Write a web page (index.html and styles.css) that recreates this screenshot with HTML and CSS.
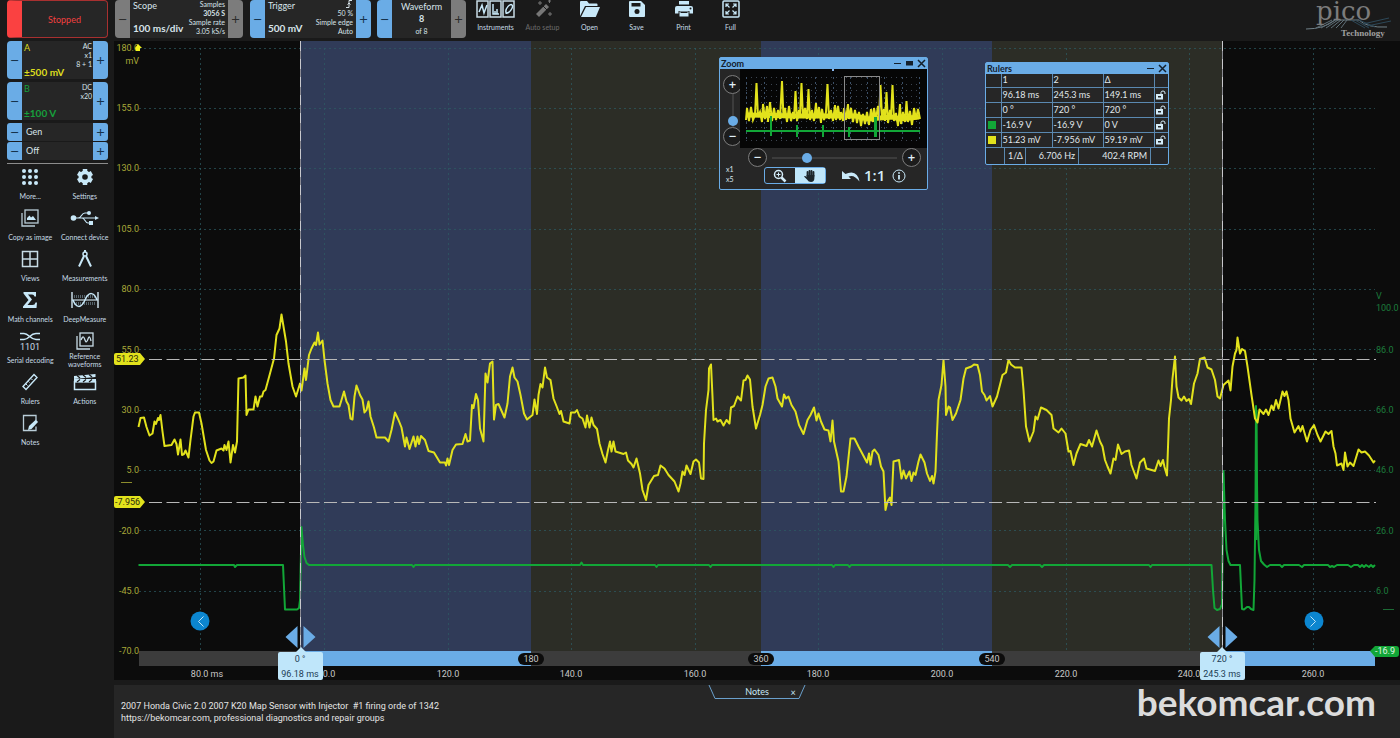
FILE: index.html
```html
<!DOCTYPE html>
<html lang="en">
    <head>
        <meta charset="UTF-8" />
        <title>PicoScope</title>
        <link rel="stylesheet" href="styles.css">
    </head>
    <body>
        <div class="app">
            <aside class="sidebar">
                <button type="button" class="run-state">Stopped</button>

                <div class="control channel channel-a">
                    <button type="button" class="step" aria-label="Decrease A range">−</button>
                    <div class="control-body">
                        <div class="name">A</div>
                        <div class="value">±500 mV</div>
                        <div class="info">AC<br>x1<br>8 + 1</div>
                    </div>
                    <button type="button" class="step" aria-label="Increase A range">+</button>
                </div>
                <div class="control channel channel-b">
                    <button type="button" class="step" aria-label="Decrease B range">−</button>
                    <div class="control-body">
                        <div class="name">B</div>
                        <div class="value">±100 V</div>
                        <div class="info">DC<br>x20</div>
                    </div>
                    <button type="button" class="step" aria-label="Increase B range">+</button>
                </div>
                <div class="generator">
                    <div class="control gen-row">
                        <button type="button" class="step" aria-label="Previous generator">−</button>
                        <div class="gen-text">Gen</div>
                        <button type="button" class="step" aria-label="Next generator">+</button>
                    </div>
                    <div class="control gen-row">
                        <button type="button" class="step" aria-label="Generator down">−</button>
                        <div class="gen-text">Off</div>
                        <button type="button" class="step" aria-label="Generator up">+</button>
                    </div>
                </div>

                <nav class="tools">
                    <button type="button" class="tool">
                        <svg width="28" height="20" viewBox="0 0 28 20" fill="#c8e8f8">
                            <circle cx="8" cy="4" r="2" /><circle cx="14" cy="4" r="2" /><circle cx="20" cy="4" r="2" />
                            <circle cx="8" cy="10" r="2" /><circle cx="14" cy="10" r="2" /><circle cx="20" cy="10" r="2" />
                            <circle cx="8" cy="16" r="2" /><circle cx="14" cy="16" r="2" /><circle cx="20" cy="16" r="2" />
                        </svg>
                        <span>More...</span>
                    </button>
                    <button type="button" class="tool">
                        <svg width="28" height="20" viewBox="0 0 28 20">
                            <g stroke="#c8e8f8" stroke-width="4.5">
                                <path d="M14 2v16M7.1 6l13.8 8M7.1 14l13.8-8" />
                            </g>
                            <circle cx="14" cy="10" r="4.5" fill="none" stroke="#c8e8f8" stroke-width="4" />
                            <circle cx="14" cy="10" r="2.8" fill="#1a1a1a" />
                        </svg>
                        <span>Settings</span>
                    </button>
                    <button type="button" class="tool">
                        <svg width="28" height="20" viewBox="0 0 28 20" fill="none" stroke="#b9cdd8" stroke-width="1.3">
                            <rect x="9" y="2" width="13" height="13" />
                            <path d="M6 5v13h13" />
                            <path d="M11 12v-2l2.500-2.500 1.500 2 2-1.500 3 4z" fill="#c8e8f8" stroke="none" />
                        </svg>
                        <span>Copy as image</span>
                    </button>
                    <button type="button" class="tool">
                        <svg width="30" height="20" viewBox="0 0 30 20" fill="none" stroke="#c8e8f8" stroke-width="1.200">
                            <path d="M4 10h22M8 10c4 0 3-5 7-5h3M12 10c3 0 3 5 6 5h3" />
                            <circle cx="3.500" cy="10" r="2.800" fill="#c8e8f8" stroke="none" />
                            <circle cx="19" cy="5" r="2" fill="#c8e8f8" stroke="none" />
                            <rect x="19" y="13" width="4" height="4" fill="#c8e8f8" stroke="none" />
                            <path d="M25 8l4 2-4 2z" fill="#c8e8f8" stroke="none" />
                        </svg>
                        <span>Connect device</span>
                    </button>
                    <button type="button" class="tool">
                        <svg width="28" height="20" viewBox="0 0 28 20" fill="none" stroke="#c8dce6" stroke-width="1.500">
                            <rect x="6.500" y="2.500" width="15" height="15" />
                            <path d="M14 2.500v15M6.500 10h15" />
                        </svg>
                        <span>Views</span>
                    </button>
                    <button type="button" class="tool">
                        <svg width="28" height="20" viewBox="0 0 28 20" fill="none" stroke="#c8e8f8">
                            <circle cx="14" cy="5" r="2" stroke-width="1.500" />
                            <path d="M14 3V1" stroke-width="2" />
                            <path d="M13 7L8 17.500M15 7l5 10.500" stroke-width="2" />
                        </svg>
                        <span>Measurements</span>
                    </button>
                    <button type="button" class="tool">
                        <svg width="28" height="20" viewBox="0 0 28 20" fill="#c8e8f8">
                            <path d="M7.500 2h12.500v4.500h-1.500q-.5-2-2.500-2h-4l4 5-4.500 5.500h5q2.500 0 3-2.500h1.500l-.5 5.500h-13.500v-1.500l5.500-6.500-5-6.500z" />
                        </svg>
                        <span>Math channels</span>
                    </button>
                    <button type="button" class="tool">
                        <svg width="30" height="20" viewBox="0 0 30 20" fill="none" stroke="#c8dce6" stroke-width="1.200">
                            <path d="M2 2v16M28 2v16" stroke-width="1.500" />
                            <path d="M4 6.500h22M4 13.500h22" stroke-dasharray="1 1" stroke="#56646c" stroke-width="3" />
                            <path d="M2 10h26" />
                            <path d="M3 10c3 8 8 9 12 0s9-8 12 0" stroke="#c8e8f8" stroke-width="1.500" />
                        </svg>
                        <span>DeepMeasure</span>
                    </button>
                    <button type="button" class="tool">
                        <svg width="28" height="20" viewBox="0 0 28 20" fill="none" stroke="#c8e8f8" stroke-width="1.500">
                            <path d="M4 2.500h4c5 0 6 6 12 6h4M4 8.500h4c5 0 6-6 12-6h4" />
                            <text x="14" y="19" class="bits">1101</text>
                        </svg>
                        <span>Serial decoding</span>
                    </button>
                    <button type="button" class="tool">
                        <svg width="28" height="20" viewBox="0 0 28 20" fill="none" stroke="#c8dce6" stroke-width="1.300">
                            <rect x="9" y="2" width="13" height="13" />
                            <path d="M6 5v13h13" />
                            <path d="M10 9c2-5 3-3 4 0s2 2 3-1 2-3 3 2" />
                        </svg>
                        <span>Reference waveforms</span>
                    </button>
                    <button type="button" class="tool">
                        <svg width="28" height="20" viewBox="0 0 28 20" fill="none" stroke="#c8e8f8" stroke-width="1.400">
                            <path d="M7 14.500L18 2.500l3 3L10 17.500z" />
                            <path d="M10 12l1.500 1.500M12.500 9.500l1 1M15 6.500l1.500 1.500" stroke-width="1" />
                        </svg>
                        <span>Rulers</span>
                    </button>
                    <button type="button" class="tool">
                        <svg width="28" height="20" viewBox="0 0 28 20">
                            <path d="M3.500 9.500h21v8h-21z" fill="none" stroke="#c8e8f8" stroke-width="1.500" />
                            <path d="M3 4l21.500-2v3L3 7zM3 7h22v3.500H3z" fill="#c8e8f8" />
                            <path d="M6 3.500l3 2.500M12 3l3 2.500M18 2.500l3 2.500M9 7.500l-3 2.500M15 7.500l-3 2.500M21 7.500l-3 2.500" stroke="#1a1a1a" stroke-width="1.200" />
                        </svg>
                        <span>Actions</span>
                    </button>
                    <button type="button" class="tool">
                        <svg width="28" height="20" viewBox="0 0 28 20">
                            <path d="M20 7v-4.500H7.500v15H20v-4" fill="none" stroke="#b9cdd8" stroke-width="1.300" />
                            <path d="M12 17l1-4 7-6.500 2 2.500-6.500 7z" fill="#c8e8f8" />
                        </svg>
                        <span>Notes</span>
                    </button>
                </nav>
            </aside>

            <main class="main">
                <header class="topbar">
                    <div class="control muted scope">
                        <button type="button" class="step" aria-label="Slower timebase">−</button>
                        <div class="control-body">
                            <div class="name">Scope</div>
                            <div class="value">100 ms/div</div>
                            <div class="info">Samples<br><b>3056 S</b><br>Sample rate<br>3.05 kS/s</div>
                        </div>
                        <button type="button" class="step" aria-label="Faster timebase">+</button>
                    </div>
                    <div class="control trigger">
                        <button type="button" class="step" aria-label="Lower threshold">−</button>
                        <div class="control-body">
                            <div class="name">Trigger</div>
                            <div class="value">500 mV</div>
                            <div class="info">
                                <svg width="7" height="8" viewBox="0 0 7 8" fill="none" stroke="#d8e4ea"><path d="M0 7.500h3v-7h3M1.500 4.500L3 3l1.500 1.500" /></svg><br>50 %<br>Simple edge<br>Auto
                            </div>
                        </div>
                        <button type="button" class="step" aria-label="Raise threshold">+</button>
                    </div>
                    <div class="control waveform">
                        <button type="button" class="step" aria-label="Previous waveform">−</button>
                        <div class="waveform-body">
                            <div>Waveform</div>
                            <b>8</b>
                            <small>of 8</small>
                        </div>
                        <button type="button" class="step step-muted" aria-label="Next waveform">+</button>
                    </div>
                    <div class="actions">
                        <button type="button" class="action">
                            <svg width="40" height="18" viewBox="0 0 40 18" fill="none" stroke="#c8dce6" stroke-width="1.500">
                                <rect x="1" y="1" width="11" height="16" /><rect x="14" y="1" width="11" height="16" /><rect x="27" y="1" width="11" height="16" />
                                <path d="M3 12l3-7 2 8 3-8M17 4v10h6M19 11v3M21 9v5M30 12c-1-3 4-9 6-7s-3 9-6 8z" stroke="#c8e8f8" />
                            </svg>
                            <span>Instruments</span>
                        </button>
                        <button type="button" class="action" disabled>
                            <svg width="22" height="18" viewBox="0 0 22 18" fill="#777">
                                <path d="M4 14L14 4l3 3L7 17z" />
                                <path d="M11 6l4 4" stroke="#1a1a1a" />
                                <path d="M6 3h4M8 1v4M16 1h3M17.500 0v3M16 14h4M18 12v4" stroke="#777" />
                            </svg>
                            <span>Auto setup</span>
                        </button>
                        <button type="button" class="action">
                            <svg width="22" height="18" viewBox="0 0 22 18" fill="#c8e8f8">
                                <path d="M1 16V2q0-1 1-1h6l2 2.500h7.500q1 0 1 1V6H6z" />
                                <path d="M2 17L7 7h14l-4 9.500q-.3.500-1 .5z" />
                            </svg>
                            <span>Open</span>
                        </button>
                        <button type="button" class="action">
                            <svg width="22" height="18" viewBox="0 0 22 18">
                                <path d="M3 2q0-1 1-1h11l4 4v11q0 1-1 1H4q-1 0-1-1z" fill="#c8e8f8" />
                                <path d="M5.500 3h9v3.500h-9z" fill="#1a1a1a" />
                                <circle cx="11" cy="11.500" r="2.500" fill="#1a1a1a" />
                            </svg>
                            <span>Save</span>
                        </button>
                        <button type="button" class="action">
                            <svg width="22" height="18" viewBox="0 0 22 18">
                                <path d="M6 1h10v3.500H6zM2 8q0-2 2-2h14q2 0 2 2v5.500h-3.500V11h-11v2.500H2z" fill="#c8e8f8" />
                                <path d="M6.500 11.500h9v5h-9z" fill="#c8e8f8" />
                                <path d="M7.500 12.500h7" stroke="#1a1a1a" />
                                <circle cx="17.500" cy="8.500" r="1" fill="#1a1a1a" />
                            </svg>
                            <span>Print</span>
                        </button>
                        <button type="button" class="action">
                            <svg width="22" height="18" viewBox="0 0 22 18" fill="none" stroke="#c8e8f8" stroke-width="1.500">
                                <rect x="3" y="1" width="16" height="16" rx="1" />
                                <path d="M6 7V4h3M6.500 4.500L9.500 7.500M16 7V4h-3M15.500 4.500l-3 3M6 11v3h3M6.500 13.500l3-3M16 11v3h-3M15.500 13.500l-3-3" stroke-width="1.200" />
                            </svg>
                            <span>Full</span>
                        </button>
                    </div>
                    <svg class="logo" width="96" height="40" viewBox="0 0 96 40">
                        <path d="M2 29q18 0 29-9h24q8 8 28 7" fill="none" stroke="#6f8088" />
                        <path d="M12 28l16-8M17 28l14-8M22 28l12-8M27 28l10-8M32 28l8-8M37 28l6-8" stroke="#5f6f78" />
                        <path d="M47 20l14 8M51 20l14 8M55 20l16 7M59 24l26-6M63 26l24-5" stroke="#2d4858" />
                        <text x="12" y="20" class="logo-name">pico</text>
                        <text x="37" y="36" class="logo-sub">Technology</text>
                    </svg>
                </header>

                <section class="chart">
                    <svg class="plot" viewBox="114 41 1286 639">
                        <rect x="301" y="41" width="230" height="610" class="zone-blue" />
                        <rect x="531" y="41" width="230" height="610" class="zone-olive" />
                        <rect x="761" y="41" width="231" height="610" class="zone-blue" />
                        <rect x="992" y="41" width="230" height="610" class="zone-olive" />

                        <path class="grid" d="M139 48.500H1375M139 108.500H1375M139 168.500H1375M139 229.500H1375M139 289.500H1375M139 349.500H1375M139 410.500H1375M139 470.500H1375M139 530.500H1375M139 591.500H1375" />
                        <path class="grid" d="M200.500 48V651M324.500 48V651M448.500 48V651M571.500 48V651M695.500 48V651M818.500 48V651M942.500 48V651M1066.500 48V651M1189.500 48V651M1313.500 48V651" />

                        <rect x="139" y="651" width="1236" height="15" class="bar" />
                        <path class="bar-on" d="M301 651h230v15h-230zM761 651h231v15h-231zM1222 651h153v15h-153z" />

                        <!-- channel B -->
                        <polyline class="trace-b" points="138.500,565 234,565 235,567 237,565 283,565 285,609.500 297,609.500 299,608 300,600 301.500,527 303,545 304.500,557 306.500,563 309,565 412,565 413.500,567 415,565 580,565 581.500,562.500 583,565 655,565 656.500,567 658,565 709,565 710.500,567 712,565 832,565 833.500,567 835,565 848,565 849.500,567 851,565 1008,565 1010,567 1012,565 1040,565 1042,567 1044,565 1149,565 1150.500,567 1152,565 1211.500,565 1213,590 1214.500,608 1217,610 1220,609 1222,604 1223.500,471 1225,520 1226.500,550 1228.500,561 1230.500,565 1240,565 1242,609 1244,609.500 1247,607 1249,607 1251,609 1253.500,610 1254.500,580 1255.500,500 1256,406 1257.500,520 1259,550 1261,561 1264,564.500 1267,567 1270,565 1280,565 1282,567 1284,565 1299,565 1302,567 1304,565 1328,565 1330,567 1332,566 1334,567 1337,565 1348,565 1351,567 1354,565 1358,565 1360,567 1362,565 1364,567 1366,565 1369,567 1371,565 1373,567 1375,565" />
                        <path class="trace-b" d="M1256.500 410v130" />

                        <!-- channel A -->
                        <polyline class="trace-a" points="138.500,427 140.500,418 144,417.500 146.500,427 149.500,435.500 152.500,433.500 154.500,421.500 156,424 158,418 159,420 160.500,415 162.500,431.500 164.500,446 171.500,445 174.500,439.500 176.500,444 178,454.500 180.500,439.500 182,455 184,454 185.500,450.500 188.500,457.500 190.500,440 193.500,416.500 195,412.500 199,412.500 201.500,423.500 206,450 209.500,460.500 211.500,463 213.500,461.500 216.500,450.500 221.500,448.500 223.500,450.500 224.500,445 226.500,450 228.500,441.500 230.500,462.500 233,445 235,452.500 237,441.500 237.500,420 238.500,378.500 243.500,377.500 245.500,375.500 246.500,415 248.500,409.500 253.500,409.500 255.500,396.500 257.500,406.500 260,396.500 262,396.500 263.500,391.500 265.500,390 270,373.500 274,358.500 276.500,335 279.500,328.500 281.500,314.500 283.500,326.500 286,341.500 288.500,363.500 292.500,386.500 296,396.500 300,383.500 301.500,390.500 304.500,368.500 306,380 309,355 311.500,348.500 314.500,342.500 316,345 318,332.500 319.500,344.500 322.500,340.500 324.500,360 327.500,383.500 330.500,400 333.500,406.500 339.500,406.500 341.500,400 344,391.500 346.500,401.500 348.500,405 350.500,418.500 352.500,419.500 354.500,396.500 356.500,385.500 360,395 362.500,399.500 364.500,412.500 366.500,410 368.500,401.500 370.500,416.500 374,427.500 376.500,437.500 385,437.500 388.500,441.500 391.500,430 395,412.500 398.500,420 401.500,427.500 405,446.500 406.500,437.500 409.500,449 413.500,436.500 415.500,446.500 417.500,436.500 419,444 421,436 425,440 428.500,451 434,452.500 440,462.500 445,462.500 446,465.500 447.500,458.500 449,465 452.500,450 456,444.500 462.500,444 465.500,434 467.500,441.500 470,440.500 472,405 473.500,408 476,394 478,400 480,428.500 483.500,441.500 485.500,373.500 487.500,382.500 490,363.500 492.500,361.500 494,419.500 496,405 498.500,404 504.500,417.500 507.500,403.500 510,376.500 512.500,367.500 514.500,377.500 517.500,381.500 520.500,395 524,413.500 527,419.500 532.500,415 534.500,399.500 537,414 538.500,395 540.500,384 542.500,387.500 545,367.500 547,377.500 550.500,380 553.500,398.500 556.500,406 559.500,414 561,411 563.500,421.500 569.500,423.500 571,412.500 575,412.500 577,410 579.500,416.500 582.500,418.500 585.500,427.500 587,415.500 589.500,427.500 591.500,417.500 593.500,425 597,429 599.500,443.500 602.500,454 605.500,462.500 608,450 610,441.500 611.500,451.500 613.500,441.500 615.500,451.500 623.500,454 626,452.500 628,460.500 631.500,464 633.500,467.500 636.500,458.500 640,473.500 642.500,490 646,500 648.500,485 654,476 658,475 660.500,465.500 664.500,468.500 668.500,475 674.500,481.500 678.500,491.500 680.500,483.500 682.500,471.500 684.500,475 686.500,465.500 690.500,474 693.500,461.500 696,459.500 699,462.500 701,478.500 703.500,479 704,443.500 706,410 708.500,390 709,368.500 711,364.500 712.500,396.500 713.500,420 716,418.500 717.500,421.500 720.500,420 723.500,425.500 726.500,420 729.500,423.500 731,407.500 734,406 737.500,396.500 741,400.500 743.500,380.500 745.500,380 747.500,375.500 750,379.500 752.500,406.500 756,428.500 760,415 762.500,405 765.500,386.500 768.500,378.500 772.500,377.500 775.500,386.500 777.500,398.500 782,406.500 784,394.500 786,398.500 788.500,396.500 791.500,405 795.500,411.500 799,425 803.500,434 807.500,420 810.500,415 814,407.500 816.500,420.500 818.500,413.500 821,421.500 824.500,429.500 828.500,430.500 830.500,441.500 832.500,420.500 834,441.500 838.500,461.500 841,491.500 843.500,491.500 846.500,476.500 850.500,438.500 854.500,438.500 858.500,446.500 867,462.500 869,453.500 870.500,464.500 872.500,451.500 874.500,449.500 878.500,455 881,466.500 883.500,471.500 885.500,510 887.500,501.500 890,497.500 891.500,505 893.500,461.500 899,460 901.500,478.500 903.500,470.500 906,478.500 909.500,471.500 911.500,481 913.500,472.500 915.500,475 918.500,461.500 920.500,454.500 924.500,462.500 927,473.500 930,481 932,476 933.500,483.500 935.500,471.500 937,433.500 938.500,400 941.500,385 943.500,360 945.500,386.500 946,415 948.500,406.500 950,407.500 952.500,420 956,413.500 960.500,400 963.500,378.500 966,368.500 971.500,366.500 974,364.500 977.500,365 980,375 982,391.500 984.500,395 986.500,400.500 990,396 992.500,406.500 997,396.500 1002.500,375 1006,372.500 1008.500,360 1011,364.500 1015,367.500 1021.500,367.500 1023.500,390 1026,426.500 1029.500,441.500 1033.500,431.500 1035.500,416.500 1037.500,419.500 1041,407.500 1046.500,410 1051.500,415 1053.500,428.500 1058.500,432.500 1061.500,428.500 1065.500,433.500 1068.500,451.500 1070.500,451 1073.500,465 1076.500,453.500 1080.500,444 1086.500,446 1089,440 1092,446.500 1096.500,430.500 1100,441.500 1102.500,446.500 1105,460 1107.500,466.500 1110.500,473.500 1113.500,458.500 1115.500,460 1118,444.500 1121.500,454 1125,451.500 1129,450.500 1131.500,465 1136.500,478.500 1140,462.500 1144,458.500 1146.500,468.500 1155,471 1158.500,460.500 1160.500,466 1163,460 1164.500,467 1167,475.500 1169,418.500 1171,400 1172.500,378.500 1175,356.500 1176.500,386.500 1178.500,397.500 1181.500,400.500 1184,396.500 1186.500,401 1189,399 1191,404 1194,383.500 1197.500,373.500 1200,359 1204.500,357.500 1207.500,367.500 1211.500,369.500 1215,380 1217.500,396.500 1220,398.500 1223.500,385 1228.500,380.500 1230.500,390.500 1232.500,366.500 1235,353.500 1236.500,350 1237.500,337.500 1240,353.500 1242,349 1245,351 1247.500,366.500 1251.500,395 1255,418.500 1257.500,422.500 1259.500,409.500 1263.500,414 1266,409.500 1268.500,415 1271.500,405.500 1273.500,410 1276,400 1278.500,408.500 1282.500,391.500 1284.500,396 1286.500,391.500 1288.500,400 1290.500,418.500 1294.500,432.500 1298.500,426 1300.500,431.500 1302.500,426 1307,441.500 1310.500,430 1314,425 1317.500,435 1320.500,441.500 1325.500,431.500 1328.500,434 1331.500,431 1333.500,446.500 1335.500,453.500 1337,465.500 1341.500,463.500 1343.500,470 1345,452.500 1347.500,466.500 1350,462.500 1353.500,466 1358.500,449.500 1361.500,452.500 1365,451.500 1369,455.500 1373.500,462.500 1375,460.500" />

                        <!-- rulers -->
                        <path class="ruler" d="M149 359.500H1376M149 502.500H1376" />
                        <path class="time-ruler" d="M300.500 41V652M1222.500 41V652" />
                        <path class="time-ruler-dots" d="M300.500 41V652M1222.500 41V652" />
                        <path class="handle" d="M297.500 626v22l-12-11zM303.500 626v22l12-11zM1219.500 626v22l-12-11zM1225.500 626v22l12-11z" />

                        <g class="label label-a">
                            <text x="139" y="51">180.0</text>
                            <text x="139" y="64">mV</text>
                            <text x="139" y="111">155.0</text>
                            <text x="139" y="171">130.0</text>
                            <text x="139" y="232">105.0</text>
                            <text x="139" y="292">80.0</text>
                            <text x="139" y="353">55.0</text>
                            <text x="139" y="413">30.0</text>
                            <text x="139" y="473">5.0</text>
                            <text x="139" y="534">-20.0</text>
                            <text x="139" y="594">-45.0</text>
                            <text x="139" y="654">-70.0</text>
                        </g>
                        <path d="M121 482.500h11" stroke="#8c8c2c" />
                        <path d="M135 48l3-4 4 4h-2v3h-4z" fill="#f4f41c" />
                        <g class="label label-b">
                            <text x="1376" y="299">V</text>
                            <text x="1376" y="311">100.0</text>
                            <text x="1376" y="353">86.0</text>
                            <text x="1376" y="413">66.0</text>
                            <text x="1376" y="473">46.0</text>
                            <text x="1376" y="534">26.0</text>
                            <text x="1376" y="594">6.0</text>
                        </g>
                        <path d="M1383 609.500h11" stroke="#1c6b35" />

                        <path class="tag-a" d="M116 353h24l5 6-5 6h-24q-2 0-2-2v-8q0-2 2-2zM116 496h24l5 6-5 6h-24q-2 0-2-2v-8q0-2 2-2z" />
                        <text x="116" y="362" class="tag-text">51.23</text>
                        <text x="115" y="505" class="tag-text">-7.956</text>
                        <path class="tag-b" d="M1370 651l5-5h21q3 0 3 3v5q0 3-3 3h-21z" />
                        <text x="1375" y="654" class="tag-text tag-text-b">-16.9</text>

                        <g class="label label-x">
                            <text x="207" y="677">80.0 ms</text>
                            <text x="324" y="677">100.0</text>
                            <text x="448" y="677">120.0</text>
                            <text x="571" y="677">140.0</text>
                            <text x="695" y="677">160.0</text>
                            <text x="818" y="677">180.0</text>
                            <text x="942" y="677">200.0</text>
                            <text x="1066" y="677">220.0</text>
                            <text x="1189" y="677">240.0</text>
                            <text x="1313" y="677">260.0</text>
                        </g>
                        <g class="phase">
                            <rect x="518" y="653" width="26" height="12" rx="6" />
                            <rect x="748" y="653" width="26" height="12" rx="6" />
                            <rect x="979" y="653" width="26" height="12" rx="6" />
                        </g>
                        <g class="label label-x">
                            <text x="531" y="662">180</text>
                            <text x="761" y="662">360</text>
                            <text x="992" y="662">540</text>
                        </g>
                        <path class="flag" d="M280 652h16l5-5 5 5h15q2 0 2 2v24q0 2-2 2h-41q-2 0-2-2v-24q0-2 2-2zM1202 652h15l5-5 5 5h16q2 0 2 2v24q0 2-2 2h-41q-2 0-2-2v-24q0-2 2-2z" />
                        <g class="label label-flag">
                            <text x="300" y="662">0 °</text>
                            <text x="300" y="677">96.18 ms</text>
                            <text x="1222" y="662">720 °</text>
                            <text x="1222" y="677">245.3 ms</text>
                        </g>
                    </svg>

                    <button type="button" class="page-button previous" aria-label="Scroll left">
                        <svg width="8" height="12" viewBox="0 0 8 12" fill="none" stroke="#bfe4f8"><path d="M7 1L2 6l5 5" /></svg>
                    </button>
                    <button type="button" class="page-button next" aria-label="Scroll right">
                        <svg width="8" height="12" viewBox="0 0 8 12" fill="none" stroke="#bfe4f8"><path d="M1 1l5 5-5 5" /></svg>
                    </button>

                    <div class="window zoom-window">
                        <div class="window-title">
                            <span>Zoom</span>
                            <button type="button" aria-label="Minimise"><svg width="9" height="9" viewBox="0 0 9 9" stroke="#14202c"><path d="M1 4.500h7" /></svg></button>
                            <button type="button" aria-label="Maximise"><svg width="9" height="9" viewBox="0 0 9 9"><path d="M1 2h7v4.500H1z" fill="#14202c" /></svg></button>
                            <button type="button" aria-label="Close zoom"><svg width="9" height="9" viewBox="0 0 9 9" stroke="#14202c" stroke-width="1.500"><path d="M1 1l7 7M8 1L1 8" /></svg></button>
                        </div>
                        <div class="zoom-view">
                            <div class="zoom-vertical">
                                <button type="button" class="round" aria-label="Zoom in vertically">+</button>
                                <input type="range" class="range range-vertical" min="0" max="100" value="5" aria-label="Vertical zoom">
                                <button type="button" class="round" aria-label="Zoom out vertically">−</button>
                            </div>
                            <svg class="preview" viewBox="740 69 187 79">
                                <path d="M746 77.500h174M746 84.500h174M746 90.500h174M746 96.500h174M746 102.500h174M746 108.500h174M746 115.500h174M746 121.500h174M746 127.500h174M746 140.500h174" stroke="#3c4450" stroke-dasharray="1 4" />
                                <path d="M746.500 77v64M764.500 77v64M781.500 77v64M798.500 77v64M815.500 77v64M833.500 77v64M850.500 77v64M867.500 77v64M884.500 77v64M902.500 77v64M919.500 77v64" stroke="#3c5068" stroke-dasharray="2 3" />
                                <path class="preview-band" d="M746 115l50 1 60 0 12 3 12-1 12-1 8 2 10-1 9-1" />
                                <polyline class="preview-a" points="746,120 747,108 749,121 751,107 753,120 755,115 756.500,83 758,117 760,112 762,122 763,104 765,119 767,106 768,122 770,102 772,121 774,108 776,120 778,110 780,119 782,81 783.500,118 785,108 787,122 789,106 791,121 793,112 794,119 795.500,91 797,121 799,110 800,116 801.500,83 803,118 805,108 807,119 808.500,89 810,120 812,110 814,121 816,103 817,118 819,107 821,123 822,109 824,120 826,112 827.500,84 829,119 831,110 833,121 835,105 836,120 838,106 840,120 841,112 843,121 844,108 846,120 848,104 849,119 851,108 853,122 855,110 857,123 859,112 861,126 863,114 865,124 867,112 869,125 871,109 873,122 874,108 876,119 878,106 879,117 880.500,85 882,117 884,109 885,121 886.500,92 888,123 890,110 891,117 892.500,85 894,121 896,113 898,126 900,104 901,124 903,112 905,122 906.500,101 908,122 910,111 912,125 914,108 916,119 918,109 920,119" />
                                <path d="M746 131h174" stroke="#12a637" stroke-width="2" />
                                <path d="M771 116v20M797 125v12M823 125v12M849 127v10" stroke="#12a637" stroke-width="2" />
                                <path d="M875.500 117v20" stroke="#12a637" stroke-width="3" />
                                <rect x="844.500" y="76.500" width="35" height="63" fill="none" stroke="#8a8a8a" />
                                <path d="M832 70h2" stroke="#8ab8f0" stroke-width="2" />
                            </svg>
                        </div>
                        <div class="zoom-bottom">
                            <div class="zoom-factors">x1<br>x5</div>
                            <div class="zoom-controls">
                                <div class="zoom-horizontal">
                                    <button type="button" class="round" aria-label="Zoom out horizontally">−</button>
                                    <input type="range" class="range" min="0" max="100" value="26" aria-label="Horizontal zoom">
                                    <button type="button" class="round" aria-label="Zoom in horizontally">+</button>
                                </div>
                                <div class="zoom-tools">
                                    <div class="toggle">
                                        <button type="button" aria-label="Magnify">
                                            <svg width="16" height="14" viewBox="0 0 16 14" fill="none" stroke="#d4ecf8">
                                                <circle cx="6.500" cy="5.500" r="4" stroke-width="1.500" /><path d="M4.500 5.500h4M6.500 3.500v4" /><path d="M9.500 8.500l4 4" stroke-width="2.500" />
                                            </svg>
                                        </button>
                                        <button type="button" class="on" aria-label="Pan">
                                            <svg width="16" height="14" viewBox="0 0 16 14" fill="none" stroke="#1c262c" stroke-linecap="round">
                                                <path d="M5.500 7V3M7.500 7V1.800M9.500 7V1.800M11.500 7V3" stroke-width="1.800" />
                                                <path d="M4.600 6h7.800v3q0 4-3.400 4-2.500 0-4-2.500L2 7.500q1-1 2.600.5z" fill="#1c262c" stroke="none" />
                                            </svg>
                                        </button>
                                    </div>
                                    <button type="button" class="plain" aria-label="Undo zoom">
                                        <svg width="20" height="12" viewBox="0 0 20 12"><path d="M1 1v8h9L7.500 6.500Q13 4 18.500 11.500 17 3 10.500 2.500 7 2.500 4.500 4z" fill="#c8e8f8" /></svg>
                                    </button>
                                    <button type="button" class="plain one-to-one">1:1</button>
                                    <button type="button" class="plain" aria-label="Zoom information">
                                        <svg width="14" height="14" viewBox="0 0 14 14" fill="none" stroke="#c8e8f8"><circle cx="7" cy="7" r="6" /><path d="M7 6v4.500M7 3.200v1.600" stroke-width="1.800" /></svg>
                                    </button>
                                </div>
                            </div>
                        </div>
                    </div>

                    <div class="window rulers-window">
                        <div class="window-title">
                            <span>Rulers</span>
                            <button type="button" aria-label="Minimise rulers"><svg width="9" height="9" viewBox="0 0 9 9" stroke="#14202c"><path d="M1 4.500h7" /></svg></button>
                            <button type="button" aria-label="Close rulers"><svg width="9" height="9" viewBox="0 0 9 9" stroke="#14202c" stroke-width="1.500"><path d="M1 1l7 7M8 1L1 8" /></svg></button>
                        </div>
                        <table class="readings">
                            <tr class="head"><th class="key"></th><th>1</th><th>2</th><th>Δ</th><th class="lock"></th></tr>
                            <tr>
                                <td></td><td>96.18 ms</td><td>245.3 ms</td><td>149.1 ms</td>
                                <td class="lock"><button type="button" aria-label="Lock time"><svg width="10" height="10" viewBox="0 0 10 10"><path d="M0 4h7v5.500H0z" fill="#d4ecf8" /><path d="M5 4V2.500q0-1.500 2-1.500t2 2V4" fill="none" stroke="#d4ecf8" /><path d="M2 6h3v1.500H2z" fill="#262626" /></svg></button></td>
                            </tr>
                            <tr>
                                <td></td><td>0 °</td><td>720 °</td><td>720 °</td>
                                <td class="lock"><button type="button" aria-label="Lock phase"><svg width="10" height="10" viewBox="0 0 10 10"><path d="M0 4h7v5.500H0z" fill="#d4ecf8" /><path d="M5 4V2.500q0-1.500 2-1.500t2 2V4" fill="none" stroke="#d4ecf8" /><path d="M2 6h3v1.500H2z" fill="#262626" /></svg></button></td>
                            </tr>
                            <tr>
                                <td><i class="swatch swatch-b"></i></td><td>-16.9 V</td><td>-16.9 V</td><td>0 V</td>
                                <td class="lock"><button type="button" aria-label="Lock channel B"><svg width="10" height="10" viewBox="0 0 10 10"><path d="M0 4h7v5.500H0z" fill="#d4ecf8" /><path d="M5 4V2.500q0-1.500 2-1.500t2 2V4" fill="none" stroke="#d4ecf8" /><path d="M2 6h3v1.500H2z" fill="#262626" /></svg></button></td>
                            </tr>
                            <tr>
                                <td><i class="swatch swatch-a"></i></td><td>51.23 mV</td><td>-7.956 mV</td><td>59.19 mV</td>
                                <td class="lock"><button type="button" aria-label="Lock channel A"><svg width="10" height="10" viewBox="0 0 10 10"><path d="M0 4h7v5.500H0z" fill="#d4ecf8" /><path d="M5 4V2.500q0-1.500 2-1.500t2 2V4" fill="none" stroke="#d4ecf8" /><path d="M2 6h3v1.500H2z" fill="#262626" /></svg></button></td>
                            </tr>
                        </table>
                        <div class="frequency">
                            <span class="inverse">1/Δ</span>
                            <span class="hertz">6.706 Hz</span>
                            <span class="rpm">402.4 RPM</span>
                        </div>
                    </div>
                </section>

                <section class="notes">
                    <div class="notes-tab">
                        <svg width="98" height="15" viewBox="0 0 98 15" fill="none" stroke="#6aa0cc"><path d="M1 0l6 13.500h84L97 0" /></svg>
                        <span>Notes</span>
                        <button type="button" aria-label="Close notes">×</button>
                    </div>
                    <p class="notes-text">2007 Honda Civic 2.0 2007 K20 Map Sensor with Injector &nbsp;#1 firing orde of 1342<br>https://bekomcar.com, professional diagnostics and repair groups</p>
                    <div class="watermark">bekomcar.com</div>
                </section>
            </main>
        </div>
    </body>
</html>
```
FILE: styles.css
```css
* {
    box-sizing: border-box;
}
body {
    margin: 0;
    background-color: #1a1a1a;
    color: #d8e4ea;
    font-family: Lato, "Open Sans", sans-serif;
    font-size: 9px;
}
button {
    margin: 0;
    padding: 0;
    border: 0;
    background: none;
    color: inherit;
    font: inherit;
}
svg {
    display: block;
}
.app {
    display: grid;
    grid-template-columns: 114px 1fr;
    min-height: 100vh;
}

/* sidebar */
.sidebar {
    display: flex;
    flex-direction: column;
    gap: 3px;
    padding: 0 6px 0 7px;
}
.run-state {
    height: 38px;
    border: 1px solid #a83030;
    border-left: 15px solid #fa4141;
    border-radius: 4px;
    background-color: #262626;
    color: #f04040;
}
.control {
    display: flex;
    height: 38px;
    border-radius: 4px;
    overflow: hidden;
    background-color: #262626;
}
.step {
    flex: none;
    width: 15px;
    background-color: #6aace6;
    color: #16324c;
    font-family: "Open Sans", sans-serif;
    font-size: 15px;
    line-height: 15px;
}
.muted .step,
.step-muted {
    background-color: #7c7c7c;
    color: #2c2c2c;
}
.control-body {
    flex: 1;
    display: grid;
    grid-template-columns: auto 1fr;
    grid-template-rows: 1fr auto;
    padding: 1px 1px 1px 2px;
    line-height: 12px;
}
.control-body .value {
    font-size: 10px;
    font-weight: bold;
    white-space: nowrap;
}
.control-body .info {
    grid-column: 2;
    grid-row: 1 / 3;
    font-size: 7px;
    line-height: 9px;
    text-align: right;
    white-space: nowrap;
}
.channel .info {
    margin-left: -12px;
}
.channel-a .name,
.channel-a .value {
    color: #dcdc1e;
}
.channel-b .name,
.channel-b .value {
    color: #16a03c;
}
.generator {
    display: flex;
    flex-direction: column;
    gap: 1px;
    padding-bottom: 3px;
    border-bottom: 1px solid #8c8c8c;
}
.gen-row {
    height: 18px;
    border-radius: 3px;
}
.gen-text {
    flex: 1;
    padding-left: 4px;
    line-height: 18px;
}
.tools {
    display: grid;
    grid-template-columns: 1fr 1fr;
    grid-auto-rows: 41px;
    margin: 0 -4px;
}
.tool {
    display: flex;
    flex-direction: column;
    align-items: center;
    justify-content: flex-start;
    color: #c8dce6;
    font-size: 7px;
    line-height: 8px;
}
.tool span {
    display: flex;
    align-items: center;
    justify-content: center;
    min-height: 18px;
}
.bits {
    fill: #c8dce6;
    stroke: none;
    font-family: Roboto, sans-serif;
    font-size: 9px;
    text-anchor: middle;
}

/* top bar */
.main {
    display: flex;
    flex-direction: column;
    min-width: 0;
}
.topbar {
    display: flex;
    height: 41px;
    padding-left: 1px;
}
.topbar .control-body {
    padding: 0 3px 2px 3px;
}
.topbar .control-body .value {
    line-height: 15px;
}
.scope {
    width: 128px;
    margin-right: 7px;
}
.trigger {
    width: 121px;
    margin-right: 6px;
}
.trigger svg {
    display: inline-block;
    vertical-align: top;
}
.waveform {
    width: 89px;
}
.waveform-body {
    flex: 1;
    display: flex;
    flex-direction: column;
    align-items: center;
    padding-top: 1px;
    line-height: 12px;
}
.waveform-body small {
    font-size: 7px;
}
.actions {
    display: flex;
    margin-left: 6px;
}
.action {
    display: flex;
    flex-direction: column;
    align-items: center;
    gap: 5px;
    width: 47px;
    color: #c8dce6;
    font-size: 7px;
    line-height: 8px;
}
.action:disabled {
    color: #6c6c6c;
}
.logo {
    margin-left: auto;
}
.logo-name {
    fill: #7c7c7c;
    font-family: "DejaVu Serif", serif;
    font-size: 26px;
}
.logo-sub {
    fill: #a0a0a0;
    font-family: "Liberation Serif", serif;
    font-size: 9px;
    font-weight: bold;
}

/* chart */
.chart {
    position: relative;
    background-color: #0c0c0c;
}
.plot {
    width: 100%;
    height: auto;
}
.zone-blue {
    fill: #303b58;
}
.zone-olive {
    fill: #2c2d26;
}
.grid {
    fill: none;
    stroke: #2c5c64;
    stroke-opacity: 0.7;
    stroke-dasharray: 2 3;
}
.bar {
    fill: #3c3c3c;
}
.bar-on {
    fill: #6aace6;
}
.trace-a,
.trace-b {
    fill: none;
    stroke: #e2e21c;
    stroke-width: 2;
    stroke-linejoin: round;
}
.trace-b {
    stroke: #12a637;
}
.ruler {
    fill: none;
    stroke: #b8b8b8;
    stroke-dasharray: 13 4.5;
}
.time-ruler {
    stroke: #8c8c94;
}
.time-ruler-dots {
    stroke: #c8c8cc;
    stroke-dasharray: 10 8;
}
.handle {
    fill: #6aace6;
}
.label {
    font-family: Roboto, sans-serif;
    font-size: 9px;
}
.label-a {
    fill: #a8a838;
    text-anchor: end;
}
.label-b {
    fill: #1c7c3c;
}
.label-x {
    fill: #c8c8c8;
    text-anchor: middle;
}
.label-flag {
    fill: #1c3c54;
    text-anchor: middle;
}
.tag-a {
    fill: #e2e21c;
}
.tag-b {
    fill: #12a637;
}
.tag-text {
    fill: #2c2c0c;
    font-family: Roboto, sans-serif;
    font-size: 9px;
}
.tag-text-b {
    fill: #e0f4e4;
}
.phase {
    fill: #0c0c0c;
}
.flag {
    fill: #bfe6fa;
}
.page-button {
    position: absolute;
    top: 90.8%;
    display: flex;
    align-items: center;
    justify-content: center;
    width: 19px;
    height: 19px;
    border-radius: 50%;
    background-color: #0c86d0;
    transform: translate(-50%, -50%);
}
.previous {
    left: 6.7%;
}
.next {
    left: 93.3%;
}

/* floating windows */
.window {
    position: absolute;
    border: 1px solid #6aace6;
    border-radius: 2px;
    background-color: #262626;
}
.window-title {
    display: flex;
    align-items: center;
    gap: 3px;
    height: 11px;
    padding: 0 1px;
    background-color: #6aace6;
    color: #14202c;
    font-weight: bold;
    line-height: 11px;
}
.window-title span {
    flex: 1;
}
.zoom-window {
    top: 16px;
    left: 605px;
    width: 209px;
}
.zoom-view {
    display: flex;
}
.zoom-vertical {
    flex: none;
    display: flex;
    flex-direction: column;
    align-items: center;
    width: 20px;
    padding: 6px 0 0 5px;
}
.zoom-vertical .round {
    margin: 0 -4px;
}
.preview {
    flex: 1;
    background-color: #060606;
}
.preview-a,
.preview-band {
    fill: none;
    stroke: #e2e21c;
    stroke-width: 2;
}
.preview-band {
    stroke-width: 5;
}
.round {
    flex: none;
    width: 19px;
    height: 19px;
    border: 1px solid #7c7c7c;
    border-radius: 50%;
    background-color: #1c1c1c;
    color: #e0f0f8;
    font-family: "Open Sans", sans-serif;
    font-size: 13px;
    font-weight: 600;
    line-height: 15px;
}
.range {
    flex: 1;
    min-width: 0;
    height: 10px;
    margin: 0;
    appearance: none;
    background: linear-gradient(#3c3c3c, #3c3c3c) center / 100% 2px no-repeat;
}
.range::-webkit-slider-thumb {
    appearance: none;
    width: 10px;
    height: 10px;
    border-radius: 50%;
    background-color: #6aace6;
}
.range-vertical {
    flex: none;
    width: 10px;
    height: 33px;
    writing-mode: vertical-lr;
    direction: rtl;
    background: linear-gradient(#3c3c3c, #3c3c3c) center / 2px 100% no-repeat;
}
.zoom-bottom {
    display: flex;
    padding-bottom: 5px;
}
.zoom-factors {
    flex: none;
    align-self: flex-end;
    width: 28px;
    padding-left: 6px;
    font-size: 7px;
    line-height: 10px;
}
.zoom-controls {
    flex: 1;
    min-width: 0;
}
.zoom-horizontal {
    display: flex;
    align-items: center;
    gap: 5px;
    padding-right: 6px;
}
.zoom-tools {
    display: flex;
    align-items: center;
    padding-left: 16px;
}
.toggle {
    display: flex;
    width: 62px;
    height: 17px;
    margin-right: 15px;
    border: 1px solid #6aace6;
    border-radius: 3px;
}
.toggle button {
    flex: 1;
    display: flex;
    align-items: center;
    justify-content: center;
}
.toggle .on {
    background-color: #bfe6fa;
}
.plain {
    margin-right: 3px;
}
.one-to-one {
    margin-right: 7px;
    color: #d4ecf8;
    font-family: "Open Sans", sans-serif;
    font-size: 15px;
    font-weight: 600;
    line-height: 17px;
}
.rulers-window {
    top: 21px;
    left: 871px;
    width: 184px;
}
.readings {
    width: 100%;
    border-collapse: collapse;
    table-layout: fixed;
    font-size: 9px;
    line-height: 12px;
}
.readings th,
.readings td {
    height: 15px;
    padding: 0 0 0 1px;
    border: 1px solid #5a88b0;
    color: #e0e8ec;
    font-weight: normal;
    text-align: left;
    white-space: nowrap;
}
.readings tr > :first-child {
    border-left: 0;
}
.readings tr > :last-child {
    border-right: 0;
}
.readings .head th {
    height: 13px;
    border-top: 0;
}
.readings .key {
    width: 15px;
}
.readings .lock {
    width: 14px;
}
.swatch {
    display: block;
    width: 8px;
    height: 8px;
    margin-left: 1px;
}
.swatch-a {
    background-color: #e2e21c;
}
.swatch-b {
    background-color: #12a637;
}
.lock button {
    display: block;
}
.frequency {
    display: flex;
    width: 147px;
    margin-left: 18px;
    color: #e0e8ec;
    line-height: 16px;
    white-space: nowrap;
}
.frequency span {
    padding: 0 3px;
    border-left: 1px solid #5a88b0;
    text-align: right;
}
.inverse {
    width: 21px;
}
.hertz {
    width: 53px;
}
.rpm {
    flex: 1;
    border-right: 1px solid #5a88b0;
}

/* notes */
.notes {
    flex: 1;
    position: relative;
    margin-top: 5px;
    background-color: #262626;
}
.notes-tab {
    display: grid;
    grid-template-columns: 1fr 20px;
    width: 98px;
    height: 15px;
    margin: 0 auto;
    color: #c8e8f8;
    line-height: 14px;
}
.notes-tab svg {
    grid-area: 1 / 1 / 2 / 3;
}
.notes-tab span {
    grid-area: 1 / 1;
    padding-left: 20px;
    text-align: center;
}
.notes-tab button {
    grid-area: 1 / 2;
    padding-right: 6px;
}
.notes-text {
    margin: 0;
    padding-left: 7px;
    color: #e4e4e4;
    font-family: Roboto, sans-serif;
    line-height: 12px;
}
.watermark {
    position: absolute;
    right: 24px;
    bottom: 12px;
    color: #dcdcdc;
    font-size: 37px;
    font-weight: bold;
    line-height: 48px;
}
```
